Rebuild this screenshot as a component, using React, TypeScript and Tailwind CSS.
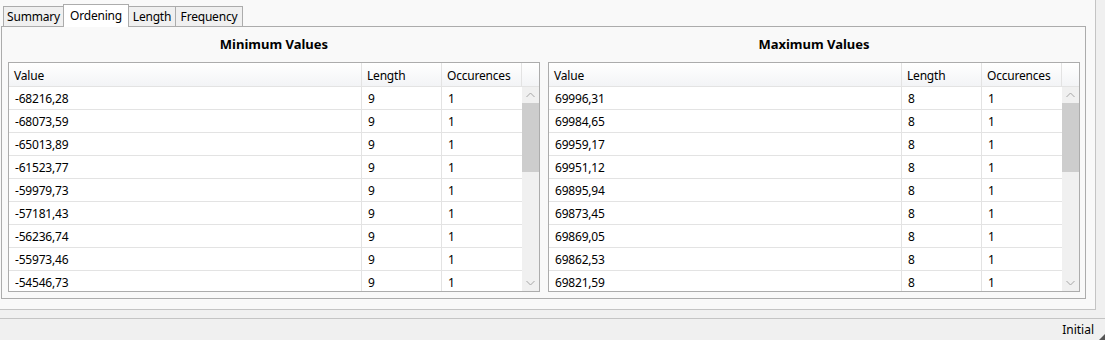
import React from "react";

const minRows: string[][] = [
  ["-68216,28", "9", "1"],
  ["-68073,59", "9", "1"],
  ["-65013,89", "9", "1"],
  ["-61523,77", "9", "1"],
  ["-59979,73", "9", "1"],
  ["-57181,43", "9", "1"],
  ["-56236,74", "9", "1"],
  ["-55973,46", "9", "1"],
  ["-54546,73", "9", "1"],
];

const maxRows: string[][] = [
  ["69996,31", "8", "1"],
  ["69984,65", "8", "1"],
  ["69959,17", "8", "1"],
  ["69951,12", "8", "1"],
  ["69895,94", "8", "1"],
  ["69873,45", "8", "1"],
  ["69869,05", "8", "1"],
  ["69862,53", "8", "1"],
  ["69821,59", "8", "1"],
];

function Chevron({ up }: { up: boolean }) {
  return (
    <svg width="9" height="6" viewBox="0 0 9 6">
      <path
        d={up ? "M0.5 5 L4.5 1 L8.5 5" : "M0.5 1 L4.5 5 L8.5 1"}
        fill="none"
        stroke="#a6a6a6"
        strokeWidth="1"
      />
    </svg>
  );
}

function Table({ title, rows }: { title: string; rows: string[][] }) {
  return (
    <div className="flex w-[532px] flex-col">
      <div className="flex h-[35px] items-center justify-center text-[13px] font-bold text-black">
        {title}
      </div>
      <div className="flex h-[230px] overflow-hidden border border-[#acacac] bg-white tracking-[-0.2px]">
        <div className="flex w-[513px] flex-col overflow-hidden">
          <div className="flex h-[24px] shrink-0 border-b border-[#e3e3e3] bg-gradient-to-b from-white to-[#f3f4f6]">
            <div className="flex w-[353px] items-center border-r border-[#e3e3e3] pt-[2px] pl-[5px]">Value</div>
            <div className="flex w-[80px] items-center border-r border-[#e3e3e3] pt-[2px] pl-[5px]">Length</div>
            <div className="flex w-[80px] items-center border-r border-[#e3e3e3] pt-[2px] pl-[5px]">Occurences</div>
          </div>
          {rows.map((r, i) => (
            <div key={i} className="flex h-[23px] shrink-0 border-b border-[#e3e3e3]">
              <div className="flex w-[353px] items-center border-r border-[#e3e3e3] pt-[2px] pl-[6px]">{r[0]}</div>
              <div className="flex w-[80px] items-center border-r border-[#e3e3e3] pt-[2px] pl-[6px]">{r[1]}</div>
              <div className="flex w-[80px] items-center pt-[2px] pl-[6px]">{r[2]}</div>
            </div>
          ))}
        </div>
        <div className="flex w-[17px] flex-col">
          <div className="h-[24px] shrink-0 border-b border-[#e3e3e3] bg-gradient-to-b from-white to-[#f3f4f6]" />
          <div className="flex flex-1 flex-col bg-[#f0f0f0]">
            <div className="flex h-[16px] items-center justify-center">
              <Chevron up />
            </div>
            <div className="h-[69px] bg-[#cdcdcd]" />
            <div className="flex-1" />
            <div className="flex h-[17px] items-center justify-center">
              <Chevron up={false} />
            </div>
          </div>
        </div>
      </div>
    </div>
  );
}

export default function App() {
  return (
    <div
      className="flex h-[340px] w-[1105px] flex-col overflow-hidden bg-[#f0f0f0] text-[12px] text-black"
      style={{ fontFamily: '"Noto Sans", "Open Sans", sans-serif' }}
    >
      <div className="flex h-[310px] w-[1096px] shrink-0 flex-col border-r border-b border-[#c4c4c4] bg-[#f9f9f9] pl-[1px]">
        <div className="flex h-[26px] shrink-0 items-end pl-[2px] tracking-[-0.2px]">
          <div className="flex h-[20px] w-[60px] items-center justify-center border-t border-l border-[#acacac] bg-[#f0f0f0] pt-[1px] leading-none">
            Summary
          </div>
          <div className="relative z-10 -mb-px flex h-[23px] w-[66px] items-start justify-center border-x border-t border-[#acacac] bg-white pt-[5px] leading-none">
            Ordening
          </div>
          <div className="flex h-[20px] w-[47px] items-center justify-center border-t border-r border-[#acacac] bg-[#f0f0f0] pt-[1px] leading-none">
            Length
          </div>
          <div className="flex h-[20px] w-[67px] items-center justify-center border-t border-r border-[#acacac] bg-[#f0f0f0] pt-[1px] leading-none">
            Frequency
          </div>
        </div>
        <div className="flex h-[273px] w-[1085px] gap-[8px] border border-[#acacac] bg-[#f9f9f9] pl-[6px] pr-[5px]">
          <Table title="Minimum Values" rows={minRows} />
          <Table title="Maximum Values" rows={maxRows} />
        </div>
      </div>
      <div className="h-[8px] shrink-0" />
      <div className="relative flex h-[22px] shrink-0 items-center justify-end border-t border-[#c4c4c4] pt-[1px] pr-[11px]">
        <span>Initial</span>
        <svg className="absolute right-0 bottom-0" width="6" height="6" viewBox="0 0 6 6">
          <path d="M6 0 L6 6 L0 6 Z" fill="#555" />
        </svg>
      </div>
    </div>
  );
}
